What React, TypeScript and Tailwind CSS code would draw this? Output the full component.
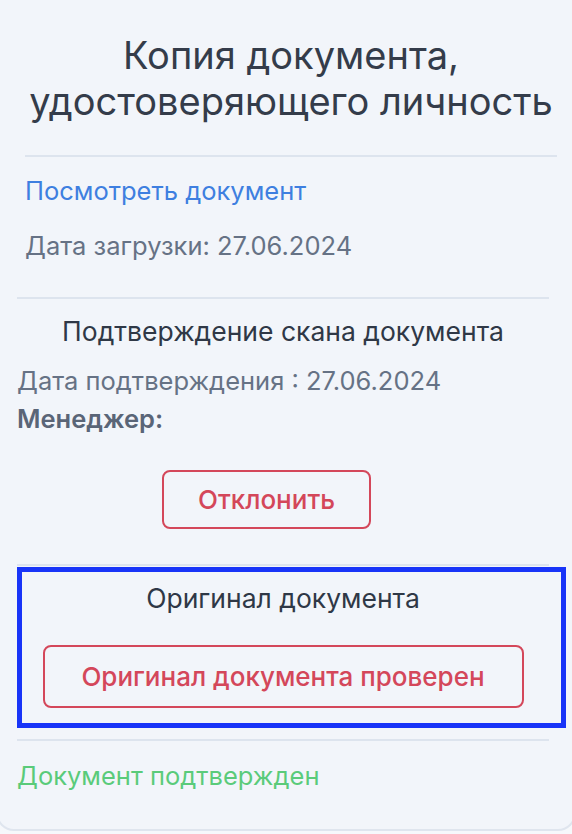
import React from "react";

export default function App() {
  return (
    <div className="h-[834px] w-[572px] overflow-hidden bg-[#f6f8fb] font-['Inter','Noto_Sans',sans-serif]">
      <div className="-mt-[12px] ml-[-4px] w-[580px] rounded-[18px] border-2 border-[#dfe5ee] bg-[#f2f5fa] pl-[19px] pr-[25px] pb-[35px]">
        {/* Copy section */}
        <div className="ml-[8px] mr-[-8px]">
          <h2 className="pt-[42px] text-center text-[38px] leading-[46px] text-[#343c4a]">
            Копия документа,
            <br />
            удостоверяющего личность
          </h2>
          <div className="mt-[31px] h-[2px] bg-[#dde4ee]" />
          <a href="#" className="mt-[16px] block text-[25.5px] leading-[36px] text-[#3e7fe0]">
            Посмотреть документ
          </a>
          <p className="mt-[19px] text-[25.5px] leading-[36px] text-[#667285]">
            Дата загрузки: 27.06.2024
          </p>
        </div>

        <div className="mt-[33px] h-[2px] bg-[#dde4ee]" />

        {/* Scan confirmation */}
        <div>
          <h3 className="mt-[14px] text-center text-[26.5px] leading-[36px] text-[#2f3846]">
            Подтверждение скана документа
          </h3>
          <p className="mt-[13px] text-[25.5px] leading-[38px] text-[#667285]">
            Дата подтверждения : 27.06.2024
          </p>
          <p className="text-[25.5px] font-semibold leading-[38px] text-[#5a6577]">Менеджер:</p>
          <div className="mt-[32px] flex justify-center pr-[33px]">
            <button className="h-[59px] w-[209px] rounded-[8px] border-2 border-[#d4475a] text-[26px] font-medium text-[#d4475a]">
              Отклонить
            </button>
          </div>
        </div>

        <div className="mt-[35px] h-[2px] bg-[#dde4ee]" />

        {/* Original */}
        <div className="relative pt-[14px]">
          <div className="pointer-events-none absolute top-[1px] left-0 right-[-17px] bottom-[-20px] border-[5px] border-[#1834f8]" />
          <h3 className="text-center text-[26.5px] leading-[36px] text-[#2f3846]">Оригинал документа</h3>
          <div className="mt-[29px] flex justify-center">
            <button className="h-[63px] w-[481px] rounded-[8px] border-2 border-[#d4475a] text-[26px] font-medium text-[#d4475a]">
              Оригинал документа проверен
            </button>
          </div>
        </div>

        <div className="mt-[31px] h-[2px] bg-[#dde4ee]" />

        <p className="mt-[17px] text-[25.5px] leading-[36px] text-[#5acb7a]">Документ подтвержден</p>
      </div>
    </div>
  );
}
